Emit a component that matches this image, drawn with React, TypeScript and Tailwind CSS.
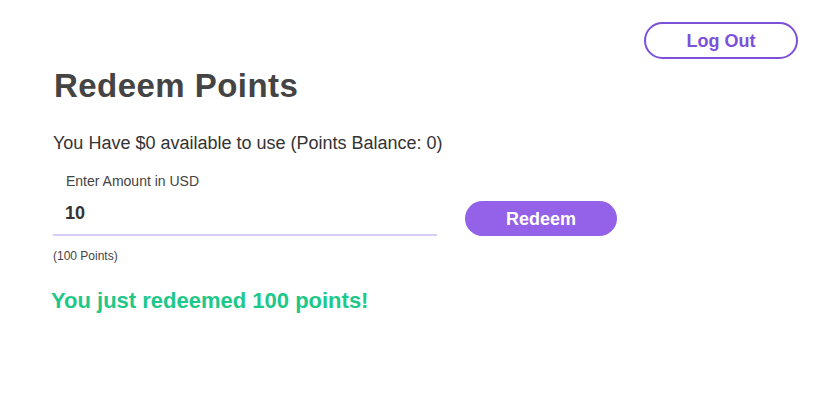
import React from "react";

export default function App() {
  return (
    <div className="w-[814px] h-[411px] bg-white" style={{ fontFamily: '"Liberation Sans", Arial, sans-serif' }}>
      <div className="flex justify-end pt-[22px] pr-[16px]">
        <button className="w-[154px] h-[37px] rounded-full border-2 border-[#7c50d9] text-[#7c50d9] text-[18px] font-bold leading-none">
          Log Out
        </button>
      </div>
      <div className="pl-[53px]">
        <h1 className="mt-[9px] pl-[1px] text-[33px] tracking-[0.45px] leading-[36px] font-bold text-[#444444]">Redeem Points</h1>
        <p className="mt-[29px] text-[18px] leading-[20px] text-[#333333]">
          You Have $0 available to use (Points Balance: 0)
        </p>
        <div className="flex items-end mt-[20px]">
          <div className="w-[384px] border-b-2 border-[#d8cbf4]">
            <div className="pl-[13px] text-[14px] leading-[16px] text-[#444444]">Enter Amount in USD</div>
            <div className="mt-[14px] pl-[12px] pb-[11px] text-[18px] leading-[20px] font-bold text-[#333333]">10</div>
          </div>
          <button className="ml-[28px] w-[152px] h-[35px] rounded-full bg-[#9462e8] text-white text-[18px] font-bold leading-none">
            Redeem
          </button>
        </div>
        <div className="mt-[13px] text-[12px] leading-[14px] text-[#444444]">(100 Points)</div>
        <div className="mt-[26px] -ml-[2px] text-[22px] leading-[24px] font-bold text-[#1dc889]">You just redeemed 100 points!</div>
      </div>
    </div>
  );
}
